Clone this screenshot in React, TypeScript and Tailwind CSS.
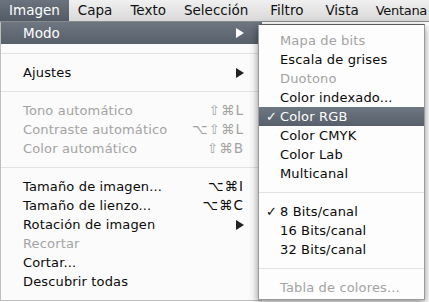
import React from "react";

type Item =
  | { sep: true }
  | { label: string; disabled?: boolean; shortcut?: string; arrow?: boolean; active?: boolean; check?: boolean };

const mainItems: Item[] = [
  { sep: true },
  { label: "Ajustes", arrow: true },
  { sep: true },
  { label: "Tono automático", disabled: true, shortcut: "⇧⌘L" },
  { label: "Contraste automático", disabled: true, shortcut: "⌥⇧⌘L" },
  { label: "Color automático", disabled: true, shortcut: "⇧⌘B" },
  { sep: true },
  { label: "Tamaño de imagen...", shortcut: "⌥⌘I" },
  { label: "Tamaño de lienzo...", shortcut: "⌥⌘C" },
  { label: "Rotación de imagen", arrow: true },
  { label: "Recortar", disabled: true },
  { label: "Cortar..." },
  { label: "Descubrir todas" },
];

const subItems: Item[] = [
  { label: "Mapa de bits", disabled: true },
  { label: "Escala de grises" },
  { label: "Duotono", disabled: true },
  { label: "Color indexado..." },
  { label: "Color RGB", check: true, active: true },
  { label: "Color CMYK" },
  { label: "Color Lab" },
  { label: "Multicanal" },
  { sep: true },
  { label: "8 Bits/canal", check: true },
  { label: "16 Bits/canal" },
  { label: "32 Bits/canal" },
  { sep: true },
  { label: "Tabla de colores...", disabled: true },
];

const bar = [
  { label: "Capa", cls: "px-[9px]" },
  { label: "Texto", cls: "px-[9px]" },
  { label: "Selección", cls: "pl-[9px] pr-[13px]" },
  { label: "Filtro", cls: "pl-[9px] pr-[13px]" },
  { label: "Vista", cls: "px-[9px]" },
  { label: "Ventana", cls: "pl-[8px] text-[13px] tracking-[-0.3px]" },
];

function Arrow({ light }: { light?: boolean }) {
  return (
    <svg width="8" height="10" viewBox="0 0 8 10" className="shrink-0">
      <path d="M0 0 L8 5 L0 10 Z" fill={light ? "#ffffff" : "#222222"} />
    </svg>
  );
}

function Separator() {
  return (
    <div className="h-[19px] flex items-center">
      <div className="h-px w-full bg-[#e2e2e2]" />
    </div>
  );
}

function MainRow({ item }: { item: Item }) {
  if ("sep" in item) return <Separator />;
  return (
    <div
      className={`h-[19px] flex items-center pl-[22px] pr-[18px] ${
        item.disabled ? "text-[#a3a3a3]" : "text-[#0a0a0a]"
      }`}
    >
      <span className="flex-1 tracking-[0.15px]">{item.label}</span>
      {item.shortcut && <span className="tracking-[1px] text-[13.5px]">{item.shortcut}</span>}
      {item.arrow && <Arrow />}
    </div>
  );
}

function SubRow({ item }: { item: Item }) {
  if ("sep" in item) return <Separator />;
  return (
    <div
      className={`h-[19px] flex items-center ${
        item.active
          ? "bg-gradient-to-b from-[#6e7682] to-[#575f6a] text-white"
          : item.disabled
          ? "text-[#a3a3a3]"
          : "text-[#0a0a0a]"
      }`}
    >
      <span className="w-[21px] pl-[7px] text-[13px]">{item.check ? "✓" : ""}</span>
      <span className="tracking-[0.15px]">{item.label}</span>
    </div>
  );
}

export default function App() {
  return (
    <div className="w-[429px] h-[302px] overflow-hidden bg-white font-['DejaVu_Sans',sans-serif] text-[13px]">
      <div className="h-[22px] flex items-center bg-gradient-to-b from-[#f0f0f0] to-[#d9d9d9] border-b border-[#8a8a8a] text-[13.5px] text-[#111] whitespace-nowrap">
        <div className="h-full flex items-center px-[9px] bg-gradient-to-b from-[#6b737e] to-[#525a65] text-white">
          Imagen
        </div>
        {bar.map((b) => (
          <div key={b.label} className={b.cls}>
            {b.label}
          </div>
        ))}
      </div>
      <div className="relative">
        <div className="w-[262px] h-[279px] bg-[#fbfbfb] border-l border-[#bdbdbd] border-b">
          <div className="h-[22px] flex items-center pl-[22px] pr-[18px] bg-gradient-to-b from-[#6e7682] to-[#575f6a] text-white text-[13.5px]">
            <span className="flex-1">Modo</span>
            <Arrow light />
          </div>
          {mainItems.map((it, i) => (
            <MainRow key={i} item={it} />
          ))}
        </div>
        <div className="absolute left-[258px] top-[2px] w-[167px] h-[276px] bg-[#fdfdfd] border border-[#9a9a9a] border-t-[#5a5a5a] shadow-[0_3px_8px_rgba(0,0,0,0.45)] pt-[6px] whitespace-nowrap">
          {subItems.map((it, i) => (
            <SubRow key={i} item={it} />
          ))}
        </div>
      </div>
    </div>
  );
}
